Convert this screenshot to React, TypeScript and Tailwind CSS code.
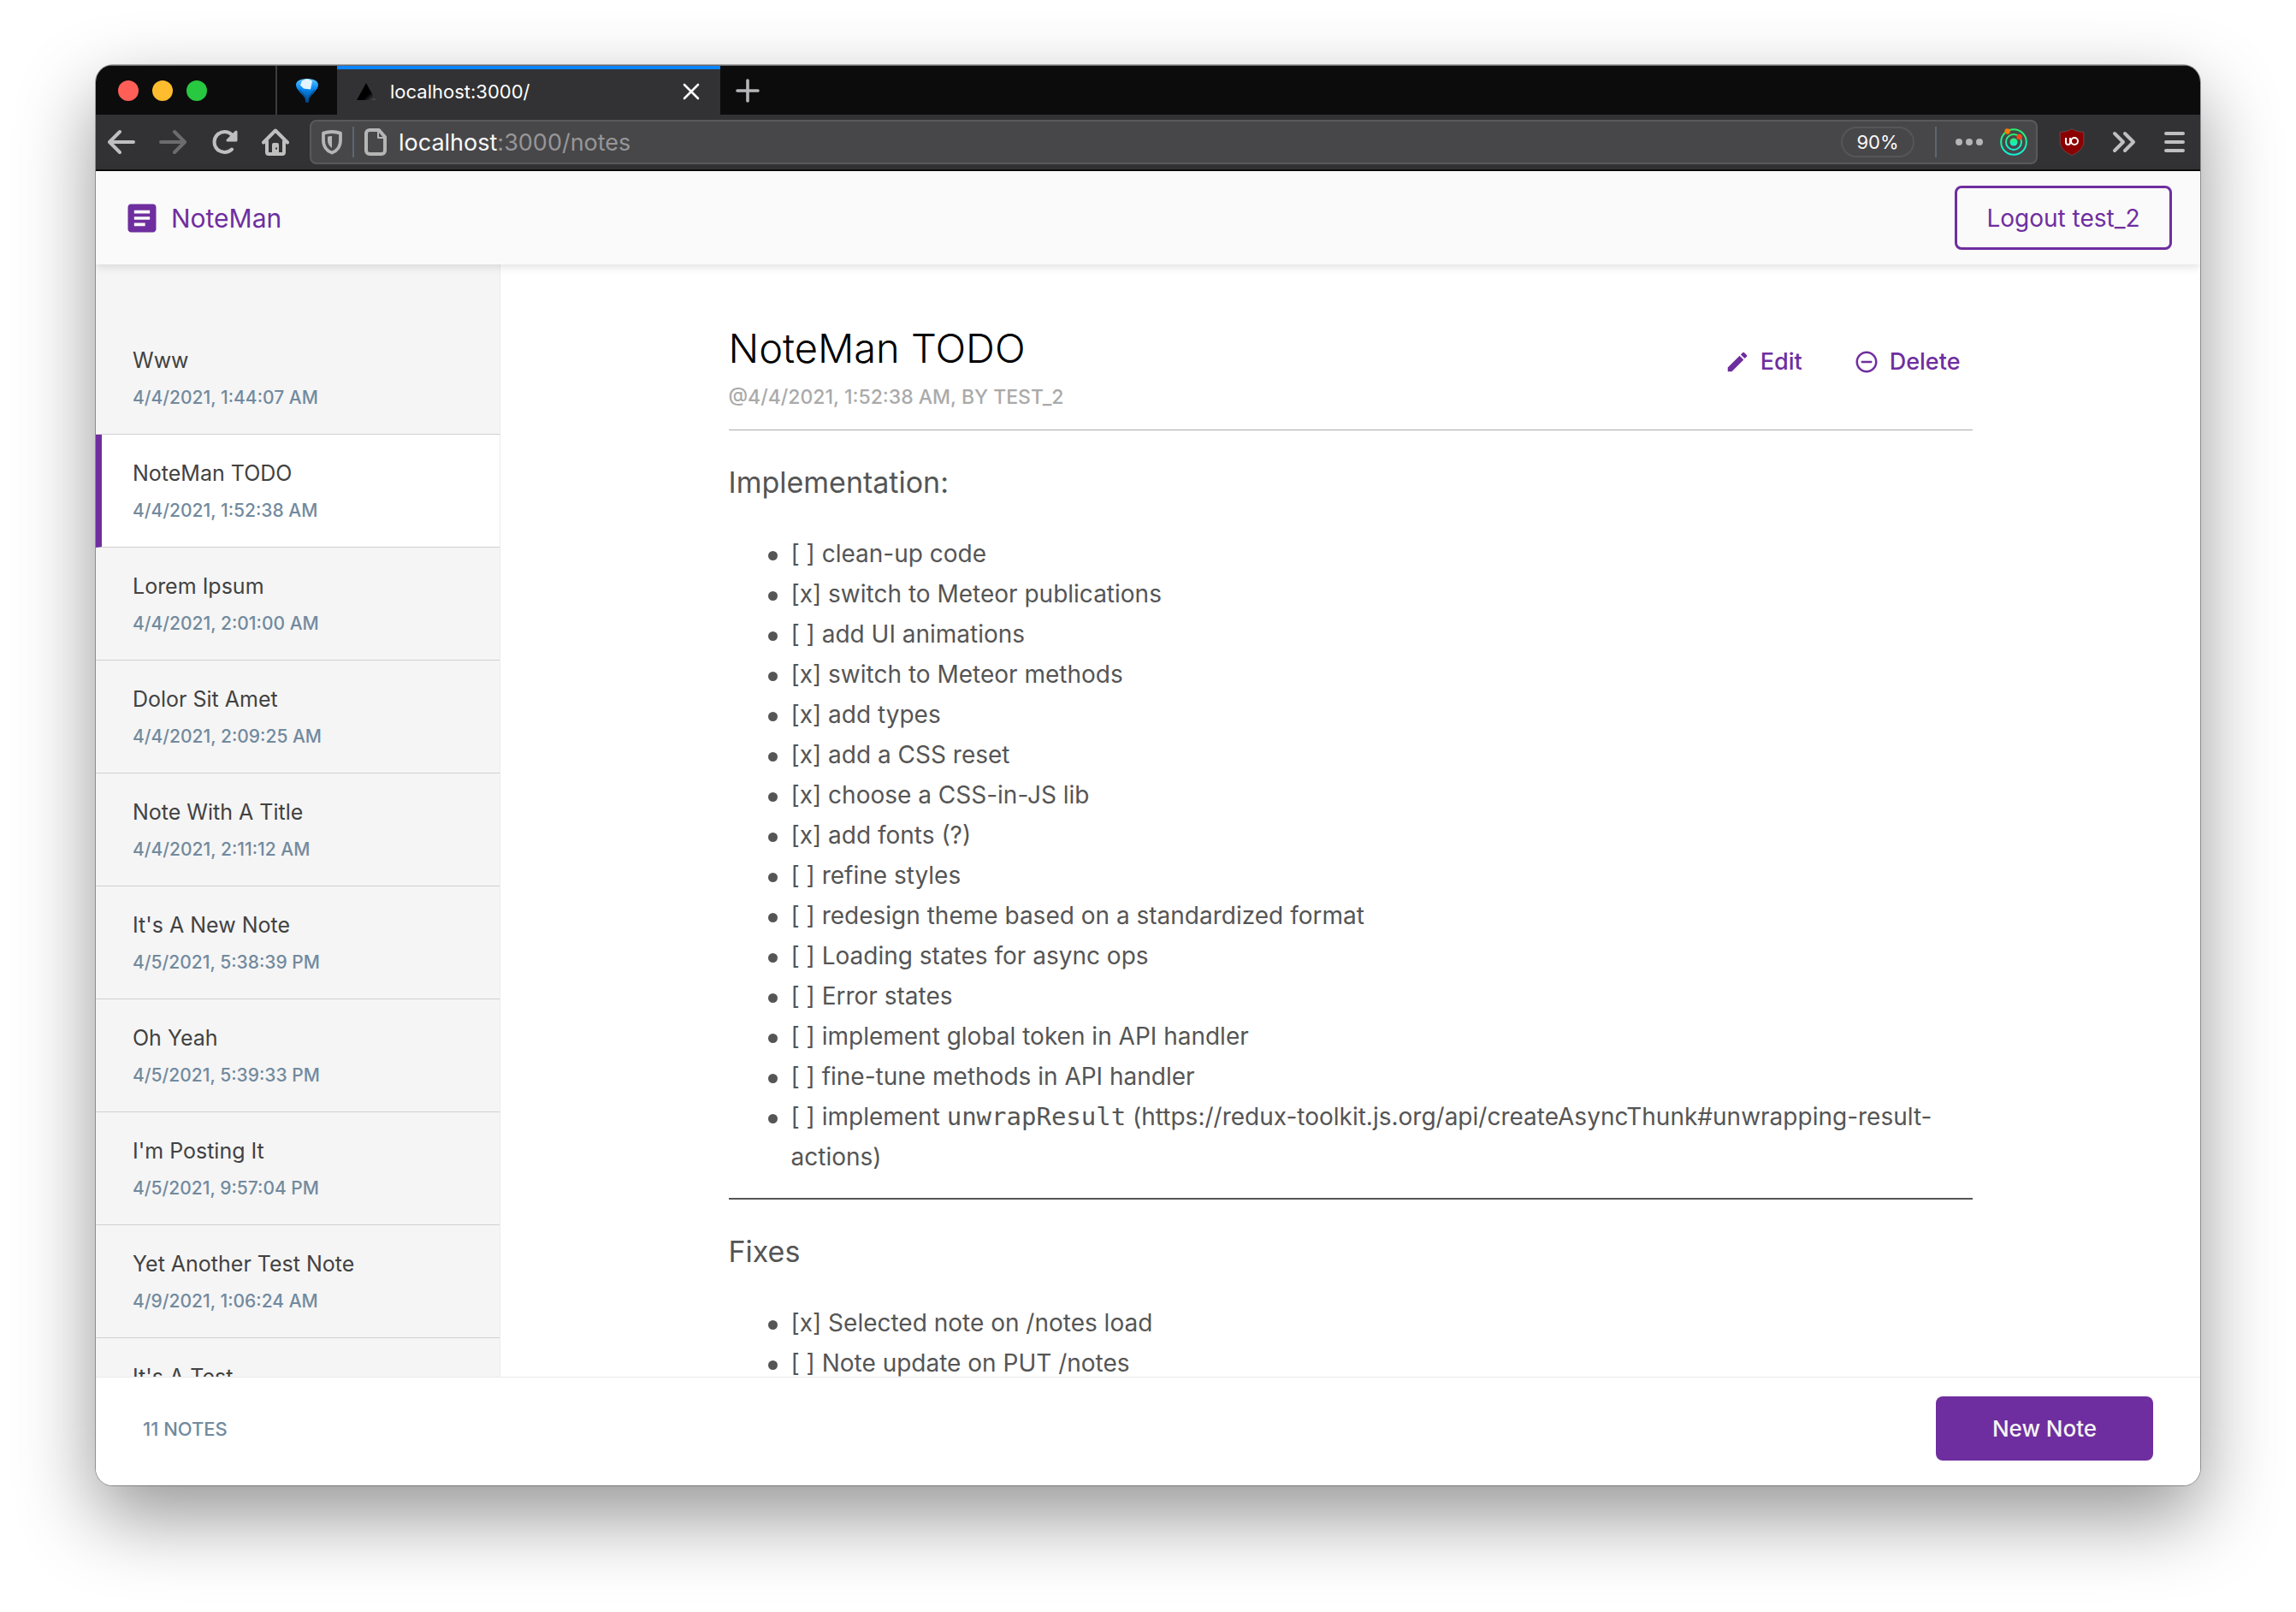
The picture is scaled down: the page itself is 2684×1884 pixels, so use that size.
import { MdArticle, MdEdit, MdRemoveCircleOutline } from "react-icons/md";

const notes = [
  { title: "Www", date: "4/4/2021, 1:44:07 AM" },
  { title: "NoteMan TODO", date: "4/4/2021, 1:52:38 AM", selected: true },
  { title: "Lorem Ipsum", date: "4/4/2021, 2:01:00 AM" },
  { title: "Dolor Sit Amet", date: "4/4/2021, 2:09:25 AM" },
  { title: "Note With A Title", date: "4/4/2021, 2:11:12 AM" },
  { title: "It's A New Note", date: "4/5/2021, 5:38:39 PM" },
  { title: "Oh Yeah", date: "4/5/2021, 5:39:33 PM" },
  { title: "I'm Posting It", date: "4/5/2021, 9:57:04 PM" },
  { title: "Yet Another Test Note", date: "4/9/2021, 1:06:24 AM" },
  { title: "It's A Test", date: "" },
];

const implementation = [
  "[ ] clean-up code",
  "[x] switch to Meteor publications",
  "[ ] add UI animations",
  "[x] switch to Meteor methods",
  "[x] add types",
  "[x] add a CSS reset",
  "[x] choose a CSS-in-JS lib",
  "[x] add fonts (?)",
  "[ ] refine styles",
  "[ ] redesign theme based on a standardized format",
  "[ ] Loading states for async ops",
  "[ ] Error states",
  "[ ] implement global token in API handler",
  "[ ] fine-tune methods in API handler",
];

const fixes = ["[x] Selected note on /notes load", "[ ] Note update on PUT /notes"];

function TabBar() {
  return (
    <div className="flex h-[58px] shrink-0 items-stretch border-t border-[#6b6b6b] bg-[#0c0c0d]">
      <div className="flex w-[210px] items-center gap-4 pl-[26px]">
        <button aria-label="Close window" className="size-6 rounded-full bg-[#ff5f57]" />
        <button aria-label="Minimize window" className="size-6 rounded-full bg-[#febc2e]" />
        <button aria-label="Zoom window" className="size-6 rounded-full bg-[#28c840]" />
      </div>
      <button aria-label="Pinned tab" className="flex w-[72px] items-center justify-center border-l-2 border-[#3c3c3e]">
        <svg width="28" height="30" viewBox="0 0 28 30">
          <defs>
            <linearGradient id="balloon" x1="0" y1="0" x2="0" y2="1">
              <stop offset="0" stopColor="#5cc4ff" />
              <stop offset="0.4" stopColor="#0a8cf5" />
              <stop offset="1" stopColor="#00407c" />
            </linearGradient>
          </defs>
          <path d="M14 1C7 1 1 3.500 1 8c0 6 7 10 10.500 16l.8 5h3.400l.8-5C20 18 27 14 27 8c0-4.500-6-7-13-7Z" fill="url(#balloon)" />
          <path d="M8 3.500 14 1l6 2.500-2 10-8-1-4-4Z" fill="#e4f5ff" />
          <path d="M5 14c3 3 5 5 7 10M23 14c-3 3-5 5-7 10" stroke="#00407c" strokeWidth="1" fill="none" />
        </svg>
      </button>
      <div className="flex w-[448px] items-center border-t-4 border-[#0a84ff] bg-[#323234] pr-6 pb-px pl-[22px] text-white">
        <svg width="24" height="22" viewBox="0 0 24 22">
          <defs>
            <linearGradient id="peak" x1="0.3" y1="0.3" x2="1" y2="1">
              <stop offset="0.5" stopColor="#000" />
              <stop offset="1" stopColor="#555" />
            </linearGradient>
          </defs>
          <path d="M12 1 23 21H1Z" fill="url(#peak)" />
        </svg>
        <span className="ml-4 flex-1 text-[22px] leading-8">localhost:3000/</span>
        <button aria-label="Close tab">
          <svg width="20" height="20" viewBox="0 0 20 20" fill="none" stroke="#f9f9fa" strokeWidth="2.6" strokeLinecap="round">
            <path d="M2 2l16 16M18 2 2 18" />
          </svg>
        </button>
      </div>
      <button aria-label="New tab" className="pl-[18px]">
        <svg width="28" height="28" viewBox="0 0 28 28" fill="none" stroke="#b5b5b7" strokeWidth="3.6" strokeLinecap="round">
          <path d="M14 2v24M2 14h24" />
        </svg>
      </button>
    </div>
  );
}

function Toolbar() {
  return (
    <div className="flex h-[66px] shrink-0 items-center border-b-2 border-[#0c0c0d] bg-[#323234] px-[14px]">
      <div className="flex gap-7">
        <button aria-label="Back">
          <svg width="32" height="32" viewBox="0 0 32 32" fill="none" stroke="#bfbfc0" strokeWidth="4" strokeLinecap="round" strokeLinejoin="round">
            <path d="M30 16H3M14 4 2 16l12 12" />
          </svg>
        </button>
        <button aria-label="Forward">
          <svg width="32" height="32" viewBox="0 0 32 32" fill="none" stroke="#6c6c6e" strokeWidth="4" strokeLinecap="round" strokeLinejoin="round">
            <path d="M2 16h27M18 4l12 12-12 12" />
          </svg>
        </button>
        <button aria-label="Reload">
          <svg width="32" height="32" viewBox="0 0 32 32" fill="none" stroke="#bfbfc0" strokeWidth="4" strokeLinecap="round" strokeLinejoin="round">
            <path d="M25 24.500A12 12 0 1 1 25 7.500" />
            <path d="M30 4v10H20z" fill="#bfbfc0" strokeWidth="3" />
          </svg>
        </button>
        <button aria-label="Home">
          <svg width="32" height="32" viewBox="0 0 32 32" fill="none" stroke="#bfbfc0" strokeWidth="4" strokeLinecap="round" strokeLinejoin="round">
            <path d="M2 16.500 16 2.500l14 14" />
            <path d="M6 15v13a2 2 0 0 0 2 2h16a2 2 0 0 0 2-2V15" />
            <path d="M12 30V19a2 2 0 0 1 2-2h4a2 2 0 0 1 2 2v11z" fill="#bfbfc0" stroke="none" />
            <path d="M16 22.500h2v2h-2z" fill="#323234" stroke="none" />
          </svg>
        </button>
      </div>
      <div className="mx-6 flex h-[52px] flex-1 items-center rounded-lg border-2 border-[#59595b] bg-[#474749] pr-[10px] pl-2">
        <button aria-label="Tracking protection">
          <svg width="32" height="32" viewBox="0 0 32 32" fill="none">
            <path d="M16 4c4 0 7 .6 10 1.600V14c0 7-4 12.500-10 14.500C10 26.500 6 21 6 14V5.600C9 4.600 12 4 16 4Z" stroke="#b5b5b6" strokeWidth="3.800" strokeLinejoin="round" />
            <path d="M16 9v14c-3-2-5-5-5-9V9.800c1.500-.5 3-.8 5-.8Z" fill="#b5b5b6" />
          </svg>
        </button>
        <span className="mx-2 h-9 w-[2px] bg-[#5b6673]" />
        <svg width="32" height="32" viewBox="0 0 32 32" fill="none" stroke="#b5b5b6" strokeWidth="4" strokeLinejoin="round">
          <path d="M10 2h11l7 8v16a4 4 0 0 1-4 4H10a4 4 0 0 1-4-4V6a4 4 0 0 1 4-4Z" />
          <path d="M20 3v8h8" strokeWidth="2" />
        </svg>
        <span className="ml-3 flex-1 pt-[2px] text-[27px] leading-9 text-[#969698]">
          <span className="text-[#f9f9fa]">localhost</span>:3000/notes
        </span>
        <button className="flex h-9 w-[86px] items-center justify-center rounded-full border-2 border-[#565658] text-[22px] text-[#f9f9fa]">90%</button>
        <span className="mr-[22px] ml-6 h-9 w-[2px] bg-[#5b6673]" />
        <button aria-label="Page actions" className="mr-5">
          <svg width="32" height="32" viewBox="0 0 32 32" fill="#b5b5b6">
            <circle cx="4" cy="16" r="4" />
            <circle cx="16" cy="16" r="4" />
            <circle cx="28" cy="16" r="4" />
          </svg>
        </button>
        <button aria-label="Tracker radar">
          <svg width="32" height="32" viewBox="0 0 32 32" fill="none">
            <defs>
              <linearGradient id="radar" x1="0" y1="0" x2="0" y2="1">
                <stop offset="0" stopColor="#2af06a" />
                <stop offset="1" stopColor="#12eedb" />
              </linearGradient>
            </defs>
            <circle cx="16" cy="16" r="14.800" stroke="url(#radar)" strokeWidth="2" />
            <circle cx="16" cy="16" r="9" stroke="url(#radar)" strokeWidth="2" />
            <circle cx="16" cy="16" r="4.500" fill="url(#radar)" />
            <circle cx="8.600" cy="3.500" r="3.200" fill="#ff7a00" />
            <circle cx="22.600" cy="10" r="3.200" fill="#ff4516" />
          </svg>
        </button>
      </div>
      <div className="flex gap-7">
        <button aria-label="Content blocker">
          <svg width="32" height="32" viewBox="0 0 32 32" fill="none">
            <path d="M16 .5c3.500 2.600 8 3.500 13.800 3.800V15c0 8-5.300 12.500-13.800 16.500C7.500 27.500 2.200 23 2.200 15V4.300C8 4 12.500 3.100 16 .5Z" fill="#8b0000" stroke="#6d5050" strokeWidth=".8" />
            <path d="M9 11v5.500a2.500 2.500 0 0 0 5 0V11" stroke="#fff" strokeWidth="2" />
            <path d="M14 11v4.500" stroke="#fff" strokeWidth="2" />
            <circle cx="19" cy="15" r="4" stroke="#fff" strokeWidth="2" />
          </svg>
        </button>
        <button aria-label="More tools">
          <svg width="32" height="32" viewBox="0 0 32 32" fill="none" stroke="#bfbfc0" strokeWidth="4" strokeLinecap="round" strokeLinejoin="round">
            <path d="M6 6l10 10L6 26M18 6l10 10-10 10" />
          </svg>
        </button>
        <button aria-label="Open menu">
          <svg width="32" height="32" viewBox="0 0 32 32" fill="none" stroke="#bfbfc0" strokeWidth="4" strokeLinecap="round">
            <path d="M6 6h20M6 16h20M6 26h20" />
          </svg>
        </button>
      </div>
    </div>
  );
}

function Checklist({ children }: { children: React.ReactNode }) {
  return <ul className="mt-[38px] pl-[73px] text-[28px] leading-[47px]">{children}</ul>;
}

function Item({ children }: { children: React.ReactNode }) {
  return (
    <li className="before:mr-4 before:-ml-[27px] before:inline-block before:size-[11px] before:rounded-full before:bg-[#555] before:align-middle before:content-['']">
      {children}
    </li>
  );
}

export default function App() {
  return (
    <div className="flex h-screen flex-col bg-white px-28 pt-[76px] pb-[148px] font-['Inter',sans-serif]">
      <div className="flex min-h-0 flex-1 flex-col overflow-hidden rounded-[20px] bg-white shadow-[0_0_0_1px_rgba(0,0,0,0.3),0_36px_90px_rgba(0,0,0,0.42)]">
        <TabBar />
        <Toolbar />
        <header className="relative z-10 flex shrink-0 items-center justify-between bg-[#fafafa] py-[17px] pr-[33px] pl-8 text-[#6f2e9f] shadow-[0_3px_10px_rgba(0,0,0,0.12)]">
          <a href="#notes" className="flex items-center gap-3 text-[30px] leading-10">
            <MdArticle className="size-11" />
            NoteMan
          </a>
          <button className="h-[75px] w-[254px] rounded-lg border-[3px] border-[#6f2e9f] text-[28px] leading-9">Logout test_2</button>
        </header>

        <div className="flex min-h-0 flex-1">
          <nav className="w-[473px] shrink-0 overflow-hidden border-r border-[#ebebeb] bg-[#f5f5f5] pt-[67px]">
            {notes.map((note) => (
              <a
                key={note.title}
                href="#note"
                className={
                  note.selected
                    ? "flex flex-col gap-3.5 border-b border-l-[7px] border-b-[#d0d0d0] border-l-[#6f2e9f] bg-white pt-[29px] pb-7 pl-9"
                    : "flex flex-col gap-3.5 border-b border-b-[#d0d0d0] pt-[29px] pb-7 pl-[43px]"
                }
              >
                <span className="text-[25px] leading-8 text-[#424242]">{note.title}</span>
                <span className="text-[21px] leading-7 font-medium text-[#728a9e]">{note.date}</span>
              </a>
            ))}
          </nav>

          <main className="min-w-0 flex-1 overflow-hidden pt-[69px]">
            <article className="mx-auto max-w-[1454px] text-[#555]">
              <div className="flex items-start justify-between border-b border-[#aaa] pb-[22px]">
                <div>
                  <h1 className="text-[47px] leading-[58px] font-light text-black">NoteMan TODO</h1>
                  <p className="mt-3 text-[23px] leading-8 font-medium text-[#aaa]">@4/4/2021, 1:52:38 AM, BY TEST_2</p>
                </div>
                <div className="flex gap-[60px] pt-[25px] pr-[14px] text-[27px] leading-10 font-medium text-[#6f2e9f]">
                  <button className="flex items-center gap-3">
                    <MdEdit className="size-[30px]" />
                    Edit
                  </button>
                  <button className="flex items-center gap-3">
                    <MdRemoveCircleOutline className="size-[30px]" />
                    Delete
                  </button>
                </div>
              </div>

              <h2 className="mt-[39px] text-[34px] leading-[44px]">Implementation:</h2>
              <Checklist>
                {implementation.map((item) => (
                  <Item key={item}>{item}</Item>
                ))}
                <Item>
                  [ ] implement <code className="font-['DejaVu_Sans_Mono',monospace] text-[29px] leading-none">unwrapResult</code>{" "}
                  (https://redux-toolkit.js.org/api/createAsyncThunk#unwrapping-result-actions)
                </Item>
              </Checklist>
              <hr className="mt-6 border-t-2 border-[#555]" />
              <h2 className="mt-[39px] text-[34px] leading-[44px]">Fixes</h2>
              <Checklist>
                {fixes.map((item) => (
                  <Item key={item}>{item}</Item>
                ))}
              </Checklist>
            </article>
          </main>
        </div>

        <footer className="flex shrink-0 items-center justify-between border-t border-[#ebebeb] bg-white px-[55px] pt-[22px] pb-[29px]">
          <span className="text-[22px] leading-8 font-medium text-[#728a9e]">11 NOTES</span>
          <button className="h-[75px] w-[254px] rounded-lg bg-[#6f2e9f] text-[26px] leading-9 font-medium text-[#f5f5f5]">New Note</button>
        </footer>
      </div>
    </div>
  );
}
